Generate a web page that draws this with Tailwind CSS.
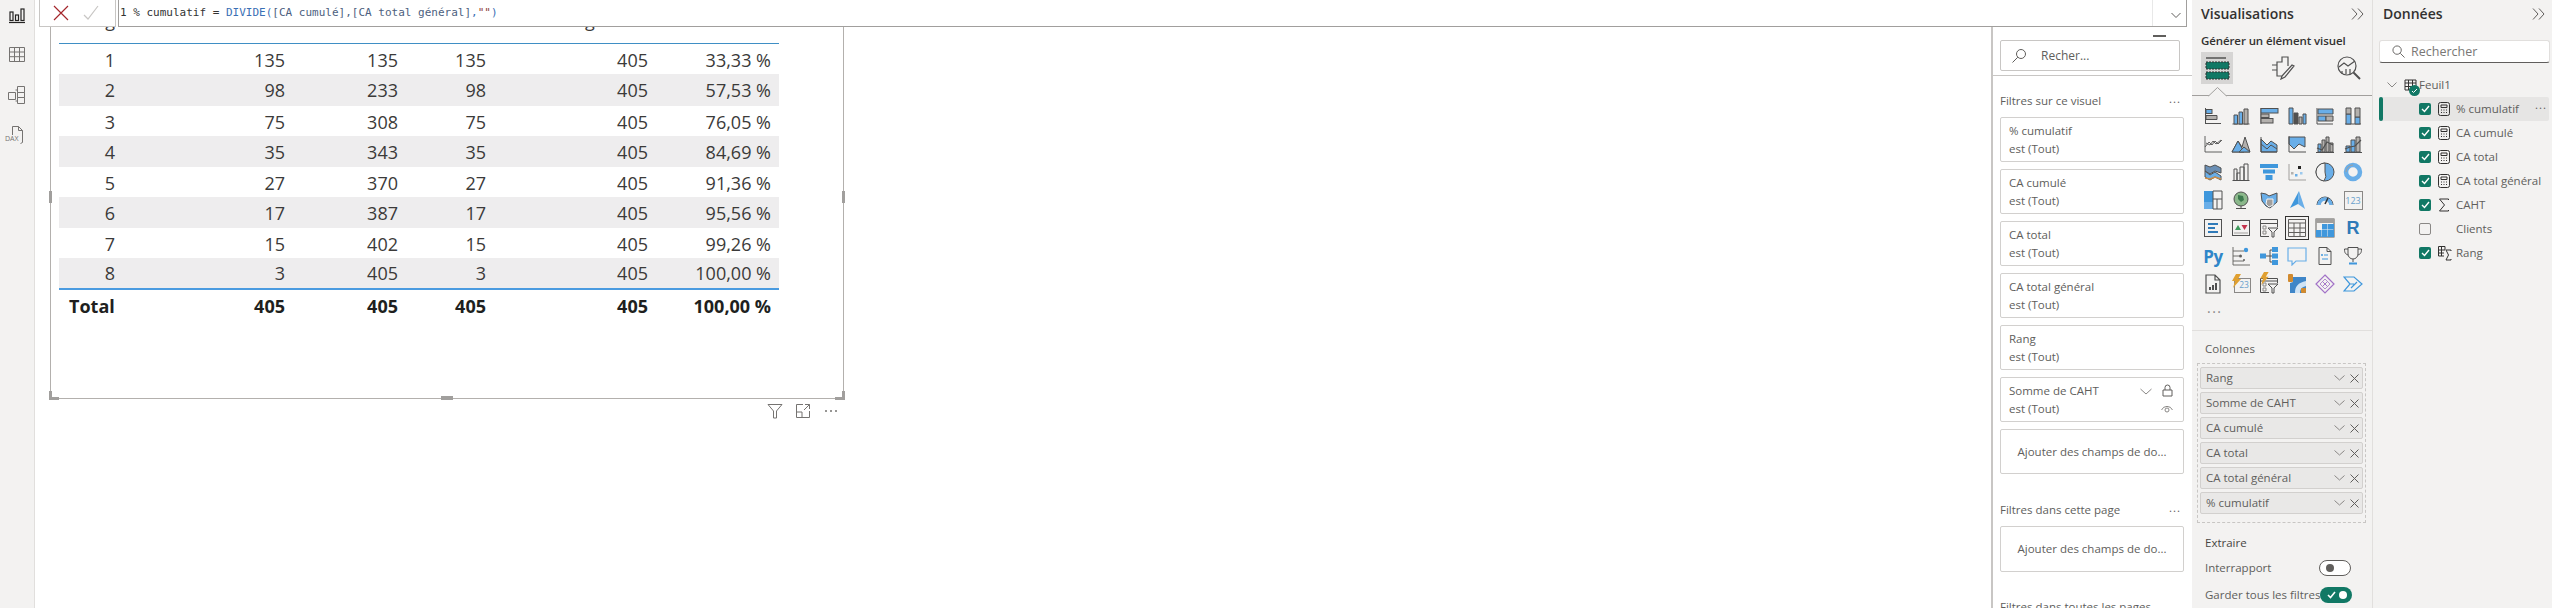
<!DOCTYPE html>
<html lang="fr">
<head>
<meta charset="UTF-8">
<title>Power BI</title>
<script src="https://cdn.jsdelivr.net/npm/@tailwindcss/browser@4"></script>
</head>
<body class="bg-white">
<div class="flex w-[2553px] h-[608px] overflow-hidden font-['Open_Sans',sans-serif] text-[#605e5c]">

  <!-- left rail -->
  <div class="w-[35px] h-full shrink-0 bg-[#f3f2f1] border-r border-[#e1dfdd] flex flex-col items-center pt-[5px]">
    <svg class="w-5 h-5" viewBox="0 0 20 20" fill="none" stroke="#252423" stroke-width="1.2"><path d="M2 17.5h16"/><rect x="3" y="7" width="3" height="8.5"/><rect x="8.5" y="10" width="3" height="5.5"/><rect x="14" y="4" width="3" height="11.5"/></svg>
    <svg class="w-5 h-5 mt-[19px]" viewBox="0 0 20 20" fill="none" stroke="#757371"><path d="M2.5 3.5h15v14h-15zM2.5 8h15M2.5 12.7h15M7.5 3.5v14M12.500 3.500v14"/></svg>
    <svg class="w-5 h-5 mt-[21px]" viewBox="0 0 20 20" fill="none" stroke="#757371"><path d="M1.500 7.500h7v7h-7zM10.500 1.500h7v6h-7zM10.500 7.500h7v5h-7zM10.500 12.500h7v6h-7zM8.500 5h2M8.500 16h2"/></svg>
    <div class="relative w-5 h-5 mt-[20px]">
      <svg class="w-5 h-5" viewBox="0 0 20 20" fill="none" stroke="#757371"><path d="M5.500 10V1.500h6l4 4v12l-2 1M11.500 1.500v4h4"/></svg>
      <span class="absolute left-[-2px] top-[10px] text-[7px] leading-[8px] text-[#757371] bg-[#f3f2f1]">DAX</span>
    </div>
  </div>

  <!-- formula bar + canvas + filters -->
  <div class="w-[2157px] h-full flex flex-col shrink-0">
    <div class="h-[27px] flex shrink-0 pl-[4px] pr-[5px] bg-white relative z-10">
      <div class="w-[77px] h-full border border-t-0 border-[#c8c6c4] flex items-center pl-[13px] gap-[14px]">
        <svg class="w-[16px] h-[16px]" viewBox="0 0 16 16" fill="none" stroke="#a4262c" stroke-width="1.200"><path d="M1 1l14 14M15 1L1 15"/></svg>
        <svg class="w-[16px] h-[16px]" viewBox="0 0 16 16" fill="none" stroke="#c8c6c4" stroke-width="1.200"><path d="M1 10l4 4L15 1"/></svg>
      </div>
      <div class="ml-[2px] flex-1 h-full border border-t-0 border-[#a19f9d] flex items-center pl-[1px] relative font-['DejaVu_Sans_Mono',monospace] text-[11px] text-[#333] whitespace-pre">
        <span>1 % cumulatif = <span class="text-[#3a6fb5]">DIVIDE(</span><span class="text-[#4d5f80]">[CA cumulé],[CA total général]</span><span class="text-[#3a6fb5]">,</span><span class="text-[#8c3b3b]">""</span><span class="text-[#3a6fb5]">)</span></span>
        <div class="absolute right-0 top-0 w-[34px] h-full border-l border-[#e8e8e8]">
          <div class="h-[2px] w-[13px] mt-[2px] bg-[#605e5c]"></div>
          <svg class="absolute right-[5px] top-[12px] w-[10px] h-[7px]" viewBox="0 0 10 7" fill="none" stroke="#605e5c"><path d="M.5 1l4.500 4.500L9.500 1"/></svg>
        </div>
      </div>
    </div>

    <div class="flex flex-1 min-h-0">
      <!-- report canvas -->
      <div class="relative w-[1956px] overflow-hidden bg-white">
        <div class="absolute left-[15px] top-[-47px] w-[794px] h-[419px] border border-[#b3b0ad] pl-[8px] pt-[27px] text-[18px] text-[#3b3a39]">
          <div class="w-[720px]">
            <div class="grid grid-cols-[64px_170px_113px_88px_162px_123px] h-[36px] border-b border-[#3f8fc5] leading-6 *:text-right *:pr-[8px] *:whitespace-nowrap">
              <div>Rang</div><div>Somme de CAHT</div><div>CA cumulé</div><div>CA total</div><div>CA total général</div><div>% cumulatif</div>
            </div>
            <div class="grid grid-cols-[64px_170px_113px_88px_162px_123px] items-center h-[30px] pt-[2px] *:text-right *:pr-[8px]"><div>1</div><div>135</div><div>135</div><div>135</div><div>405</div><div>33,33 %</div></div>
            <div class="grid grid-cols-[64px_170px_113px_88px_162px_123px] items-center h-[32px] pt-[1px] bg-[#eeedee] *:text-right *:pr-[8px]"><div>2</div><div>98</div><div>233</div><div>98</div><div>405</div><div>57,53 %</div></div>
            <div class="grid grid-cols-[64px_170px_113px_88px_162px_123px] items-center h-[30px] pt-[2px] *:text-right *:pr-[8px]"><div>3</div><div>75</div><div>308</div><div>75</div><div>405</div><div>76,05 %</div></div>
            <div class="grid grid-cols-[64px_170px_113px_88px_162px_123px] items-center h-[31px] pt-[1px] bg-[#eeedee] *:text-right *:pr-[8px]"><div>4</div><div>35</div><div>343</div><div>35</div><div>405</div><div>84,69 %</div></div>
            <div class="grid grid-cols-[64px_170px_113px_88px_162px_123px] items-center h-[30px] pt-[2px] *:text-right *:pr-[8px]"><div>5</div><div>27</div><div>370</div><div>27</div><div>405</div><div>91,36 %</div></div>
            <div class="grid grid-cols-[64px_170px_113px_88px_162px_123px] items-center h-[31px] pt-[1px] bg-[#eeedee] *:text-right *:pr-[8px]"><div>6</div><div>17</div><div>387</div><div>17</div><div>405</div><div>95,56 %</div></div>
            <div class="grid grid-cols-[64px_170px_113px_88px_162px_123px] items-center h-[30px] pt-[2px] *:text-right *:pr-[8px]"><div>7</div><div>15</div><div>402</div><div>15</div><div>405</div><div>99,26 %</div></div>
            <div class="grid grid-cols-[64px_170px_113px_88px_162px_123px] items-center h-[30px] pt-[1px] bg-[#eeedee] *:text-right *:pr-[8px]"><div>8</div><div>3</div><div>405</div><div>3</div><div>405</div><div>100,00 %</div></div>
            <div class="grid grid-cols-[64px_170px_113px_88px_162px_123px] items-center h-[35px] border-t-2 border-[#4a9be0] font-bold text-[#201f1e] *:text-right *:pr-[8px]"><div class="!text-left pl-[10px]">Total</div><div>405</div><div>405</div><div>405</div><div>405</div><div>100,00 %</div></div>
          </div>
          <!-- resize handles -->
          <div class="absolute left-[-2px] top-[210px] w-[3px] h-[12px] bg-[#a19f9d]"></div>
          <div class="absolute right-[-2px] top-[210px] w-[3px] h-[12px] bg-[#a19f9d]"></div>
          <div class="absolute left-[390px] bottom-[-2px] w-[12px] h-[4px] bg-[#a19f9d]"></div>
          <div class="absolute left-[-2px] bottom-[-2px] w-[10px] h-[9px] border-l-[3px] border-b-[3px] border-[#a19f9d]"></div>
          <div class="absolute right-[-2px] bottom-[-2px] w-[10px] h-[9px] border-r-[3px] border-b-[3px] border-[#a19f9d]"></div>
          <!-- visual header -->
          <div class="absolute top-full right-[4px] mt-[5px] flex gap-3 items-center">
            <svg class="w-4 h-4" viewBox="0 0 16 16" fill="none" stroke="#757371"><path d="M1 1.500h14L9.500 8v7h-3V8z"/></svg>
            <svg class="w-4 h-4" viewBox="0 0 16 16" fill="none" stroke="#757371"><path d="M8 1.500H1.500v13h13V8M1.500 9H7v5.500M10 1.500h4.500V6M14.500 1.500L9 7"/></svg>
            <svg class="w-4 h-4" viewBox="0 0 16 16" fill="#757371"><circle cx="3" cy="8" r="1"/><circle cx="8" cy="8" r="1"/><circle cx="13" cy="8" r="1"/></svg>
          </div>
        </div>
      </div>

      <!-- filter pane -->
      <div class="w-[201px] h-full border-l-2 border-[#c8c6c4] bg-white text-[11.5px] leading-[18px] overflow-hidden">
        <div class="ml-[7px] mt-[13px] w-[180px] h-[31px] border border-[#c8c6c4] rounded-[2px] flex items-center pl-[10px] gap-[14px] text-[12px]">
          <svg class="w-[16px] h-[16px]" viewBox="0 0 16 16" fill="none" stroke="#605e5c"><circle cx="10" cy="6" r="4.500"/><path d="M6.800 9.200L1.500 14.500"/></svg>
          <span>Recher...</span>
        </div>
        <div class="mt-[4px] border-b border-[#c8c6c4]"></div>
        <div class="ml-[7px] mt-[16px] w-[184px] flex justify-between pr-[3px]"><span>Filtres sur ce visuel</span><span class="tracking-[1px] leading-[14px]">...</span></div>
        <div class="ml-[7px] w-[184px] mt-[7px] flex flex-col gap-[7px]">
          <div class="h-[45px] border border-[#d2d0ce] rounded-[2px] px-[8px] pt-[4px]">% cumulatif<br>est (Tout)</div>
          <div class="h-[45px] border border-[#d2d0ce] rounded-[2px] px-[8px] pt-[4px]">CA cumulé<br>est (Tout)</div>
          <div class="h-[45px] border border-[#d2d0ce] rounded-[2px] px-[8px] pt-[4px]">CA total<br>est (Tout)</div>
          <div class="h-[45px] border border-[#d2d0ce] rounded-[2px] px-[8px] pt-[4px]">CA total général<br>est (Tout)</div>
          <div class="h-[45px] border border-[#d2d0ce] rounded-[2px] px-[8px] pt-[4px]">Rang<br>est (Tout)</div>
          <div class="relative h-[45px] border border-[#d2d0ce] rounded-[2px] px-[8px] pt-[4px]">Somme de CAHT<br>est (Tout)
            <svg class="absolute left-[139px] top-[10px] w-[12px] h-[7px]" viewBox="0 0 12 7" fill="none" stroke="#8a8886"><path d="M.5 1L6 6l5.500-5"/></svg>
            <svg class="absolute left-[161px] top-[6px] w-[11px] h-[13px]" viewBox="0 0 11 13" fill="none" stroke="#605e5c"><path d="M1 6h9v6H1zM3 6V3.500a2.500 2.500 0 015 0V6"/></svg>
            <svg class="absolute left-[160px] top-[26px] w-[12px] h-[9px]" viewBox="0 0 12 9" fill="none" stroke="#8a8886"><path d="M.5 6a6 6 0 0111 0"/><circle cx="6" cy="6" r="2"/></svg>
          </div>
          <div class="h-[45px] border border-[#d2d0ce] rounded-[2px] flex items-center justify-center">Ajouter des champs de do...</div>
        </div>
        <div class="ml-[7px] mt-[27px] w-[184px] flex justify-between pr-[3px]"><span>Filtres dans cette page</span><span class="tracking-[1px] leading-[14px]">...</span></div>
        <div class="ml-[7px] mt-[7px] w-[184px] h-[46px] border border-[#d2d0ce] rounded-[2px] flex items-center justify-center">Ajouter des champs de do...</div>
        <div class="ml-[7px] mt-[26px]">Filtres dans toutes les pages</div>
      </div>
    </div>
  </div>

  <!-- visualisations pane -->
  <div class="w-[181px] h-full shrink-0 bg-[#f3f2f1] border-r border-[#e1dfdd] text-[11.5px] leading-[18px]">
    <div class="h-[28px] flex items-center justify-between pl-[9px] pr-[8px]">
      <span class="text-[14px] font-semibold text-[#323130]">Visualisations</span>
      <svg class="w-[13px] h-[12px]" viewBox="0 0 13 12" fill="none" stroke="#605e5c"><path d="M1 .5L6 6l-5 5.500M7 .5L12 6l-5 5.500"/></svg>
    </div>
    <div class="mt-[4px] pl-[9px] h-[18px] font-semibold text-[#323130] text-[11.5px] tracking-[-0.1px]">Générer un élément visuel</div>
    <div class="mt-[2px] ml-[9px] flex items-center h-[32px]">
      <div class="w-[32px] h-[32px] bg-[#d6d5d4] flex items-center justify-center">
        <svg class="w-[26px] h-[26px]" viewBox="0 0 26 26"><path d="M2 3h20" stroke="#323130" stroke-width="1.200"/><rect x="2" y="7" width="23" height="7" fill="#117865" stroke="#323130" stroke-dasharray="2 1"/><rect x="2" y="17" width="23" height="7" fill="#117865" stroke="#323130" stroke-dasharray="2 1"/></svg>
      </div>
      <svg class="ml-[38px] w-[24px] h-[24px]" viewBox="0 0 24 24" fill="none" stroke="#505050" stroke-width="1.200"><path d="M1 9h5v11h5M6 9V6h5V1h6v9M1 14h5M11 20l10-11 2 1-9 11-4 2z"/></svg>
      <svg class="ml-[42px] w-[24px] h-[24px]" viewBox="0 0 24 24" fill="none" stroke="#505050" stroke-width="1.200"><circle cx="10" cy="10" r="9"/><path d="M16.500 16.500L23 23" stroke-width="2"/><path d="M2 11l5-4 4 3 7-5M5 15v3M9 13v5M13 13v5"/></svg>
    </div>
    <div class="relative h-[12px] border-b border-[#a19f9d]">
      <svg class="absolute left-[16px] top-[3px] w-[19px] h-[10px]" viewBox="0 0 19 10" fill="#f3f2f1" stroke="#a19f9d"><path d="M0 9.500L9.500 .5 19 9.500"/><path d="M0 10h19" stroke="#f3f2f1"/></svg>
    </div>

    <div class="ml-[7px] mt-[6px] grid grid-cols-[repeat(6,28px)] auto-rows-[28px] place-items-center">
      <!-- row 1 -->
      <svg class="w-5 h-5" viewBox="0 0 20 20" fill="none" stroke="#505050"><path d="M2.500 2v16M2.500 17.500H18"/><rect x="3" y="3.500" width="6" height="4" fill="#69aee8"/><path d="M3 9.500h11v4H3z" fill="#b3b0ad"/></svg>
      <svg class="w-5 h-5" viewBox="0 0 20 20" fill="none" stroke="#505050"><path d="M1.500 18h17"/><path d="M3 9h3.500v9H3zM8 6h3.500v12H8z" fill="#69aee8"/><path d="M13 3h4v15h-4z" fill="#b3b0ad"/></svg>
      <svg class="w-5 h-5" viewBox="0 0 20 20" fill="none" stroke="#505050"><path d="M2 2v16"/><rect x="2" y="2.500" width="17" height="4.500" fill="#69aee8"/><rect x="2" y="8" width="8" height="3.500" fill="#b3b0ad"/><rect x="2" y="12.500" width="12" height="4.500" fill="#b3b0ad"/></svg>
      <svg class="w-5 h-5" viewBox="0 0 20 20" fill="none" stroke="#505050"><path d="M2 2h4v16H2z" fill="#69aee8"/><path d="M7 7h4v11H7z" fill="#505050"/><path d="M12 11h3v7h-3z" fill="#b3b0ad"/><path d="M16 8h3v10h-3z" fill="#69aee8"/></svg>
      <svg class="w-5 h-5" viewBox="0 0 20 20" fill="none" stroke="#505050"><path d="M2 2v16M2 18h16"/><path d="M3 3h15v5H3z" fill="#69aee8"/><path d="M3 10h8v5H3z" fill="#69aee8"/><path d="M11 10h7v5h-7z" fill="#b3b0ad"/></svg>
      <svg class="w-5 h-5" viewBox="0 0 20 20" fill="none" stroke="#505050"><path d="M2 18h16"/><path d="M3 8h5v10H3zM12 11h5v7h-5z" fill="#69aee8"/><path d="M3 2h5v6H3zM12 2h5v9h-5z" fill="#b3b0ad"/></svg>
      <!-- row 2 -->
      <svg class="w-5 h-5" viewBox="0 0 20 20" fill="none" stroke="#505050"><path d="M2 2v16M2 18h17M2 13l4-5 3 3 3-4 3 3 4-4M3 9l4 2 3-4 3 3 5-4" stroke-width=".9"/></svg>
      <svg class="w-5 h-5" viewBox="0 0 20 20" stroke="#505050"><path d="M1 18l6-11 4 6 3-10 5 15z" fill="#b3b0ad"/><path d="M1 18l6-11 6 11z" fill="#69aee8"/><path d="M8 18l5-5 6 5z" fill="#69aee8"/></svg>
      <svg class="w-5 h-5" viewBox="0 0 20 20" stroke="#505050"><path d="M2 5l6 6 4-4 6 4v7H2z" fill="#69aee8"/><path d="M2 10l6 5 4-4 6 4" fill="none"/><path d="M2 3v15h16" fill="none"/></svg>
      <svg class="w-5 h-5" viewBox="0 0 20 20" stroke="#505050"><path d="M2 3h16v10l-6-3-5 5-5-5z" fill="#69aee8"/><path d="M2 2v16h17" fill="none"/></svg>
      <svg class="w-5 h-5" viewBox="0 0 20 20" fill="none" stroke="#505050"><path d="M1 18.500h18"/><path d="M3 10h3v8H3z" fill="#69aee8"/><path d="M7 6h3v12H7zM11 3h3v15h-3zM15 9h3v9h-3z"  fill="#b3b0ad"/><path d="M2 14l5 2 5-8 6 3" stroke-width="1.200"/></svg>
      <svg class="w-5 h-5" viewBox="0 0 20 20" fill="none" stroke="#505050"><path d="M1 18.500h18"/><path d="M3 12h4v6H3zM8 6h4v12H8z" fill="#69aee8"/><path d="M13 3h4v15h-4z" fill="#b3b0ad"/><path d="M2 15l5-2 5-1 6-6" stroke-width="1.200"/></svg>
      <!-- row 3 -->
      <svg class="w-5 h-5" viewBox="0 0 20 20" stroke="#505050"><path d="M2 3l5 2 5-2 6 3v5l-6-2-5 3-5-3z" fill="#6a8fb5"/><path d="M2 9l5 4 5-3 6 4v4l-6-3-5 3-5-3z" fill="#69aee8"/><path d="M2 16l5 1 5-2 6 2" stroke="#c98d4a" fill="none" stroke-width="1.500"/></svg>
      <svg class="w-5 h-5" viewBox="0 0 20 20" fill="none" stroke="#505050"><path d="M1.500 18.500h17M3 18V7h3v11M6 18v-7h3v7M9 11V5h4v13M13 18V2h4v16"/></svg>
      <svg class="w-5 h-5" viewBox="0 0 20 20" fill="#3f97dc"><path d="M1 2h18v4H1zM4 7.500h12v4H4zM6.500 13h7v5h-7z"/></svg>
      <svg class="w-5 h-5" viewBox="0 0 20 20" fill="none" stroke="#a19f9d"><path d="M2 2v16h17"/><rect x="4" y="10" width="2.500" height="2.500" fill="#b3b0ad" stroke="none"/><rect x="11" y="4" width="3" height="3" fill="#252423" stroke="none"/><rect x="8" y="12" width="2.500" height="2.500" fill="#69aee8" stroke="none"/><rect x="13" y="10" width="2.500" height="2.500" fill="#9cc9ee" stroke="none"/></svg>
      <svg class="w-5 h-5" viewBox="0 0 20 20" stroke="#505050"><circle cx="10" cy="10" r="9" fill="#69aee8"/><path d="M10 10V1a9 9 0 00-9 9 9 9 0 008 9 9 9 0 001-9z" fill="#f3f2f1"/></svg>
      <svg class="w-5 h-5" viewBox="0 0 20 20" fill="none"><circle cx="10" cy="10" r="7" stroke="#69aee8" stroke-width="4.500"/><path d="M3 10a7 7 0 017-7" stroke="#a19f9d" stroke-width="1"/></svg>
      <!-- row 4 -->
      <svg class="w-5 h-5" viewBox="0 0 20 20" stroke="#505050"><rect x="1" y="1" width="9" height="11" fill="#3f97dc" stroke="none"/><rect x="1" y="12" width="9" height="7" fill="#69aee8" stroke="none"/><path d="M10 1h9v18h-9zM10 9h9M14 9v10" fill="none"/></svg>
      <svg class="w-5 h-5" viewBox="0 0 20 20" fill="none" stroke="#505050"><circle cx="10" cy="9" r="7" fill="#8bb88b"/><path d="M7 5l5 1 1 4-3 2-3-3z" fill="#3c7a4e" stroke="none"/><path d="M5 18.500h10M10 16v2"/></svg>
      <svg class="w-5 h-5" viewBox="0 0 20 20" stroke="#505050"><path d="M2 3l5 1 3 2 8-3v9l-7 6-4-2-4-5z" fill="#69aee8"/><path d="M8 9l6 0v6l-4 2-3-3z" fill="#a19f9d" stroke="#f3f2f1"/></svg>
      <svg class="w-5 h-5" viewBox="0 0 20 20"><path d="M12 1L3 18l8-4z" fill="#3f97dc"/><path d="M12 1l6 18-7-5z" fill="#69aee8"/></svg>
      <svg class="w-5 h-5" viewBox="0 0 20 20" fill="none"><path d="M2 15a8 8 0 0116 0" stroke="#505050" stroke-width="1"/><path d="M4 15a6 6 0 0112 0" stroke="#69aee8" stroke-width="3.500"/><path d="M10 14l3-6" stroke="#323130" stroke-width="1.500"/></svg>
      <div class="w-[19px] h-[19px] border border-[#8a8886] flex items-center justify-center text-[9px] leading-none text-[#69a0cc]">123</div>
      <!-- row 5 -->
      <svg class="w-5 h-5" viewBox="0 0 20 20" fill="none" stroke="#505050"><rect x="1.500" y="1.500" width="17" height="17"/><path d="M5 6h10M5 10h7M5 14h10" stroke="#2f7ab8" stroke-width="1.800"/></svg>
      <svg class="w-5 h-5" viewBox="0 0 20 20" stroke="#505050"><rect x="1.500" y="2.500" width="17" height="15" fill="none"/><path d="M4 12l3-5 3 5z" fill="#3f9a5d" stroke="none"/><path d="M10.500 7h6l-3 5z" fill="#c4314b" stroke="none"/><path d="M3 15h14" stroke="#a19f9d"/></svg>
      <svg class="w-5 h-5" viewBox="0 0 20 20" fill="none" stroke="#505050"><path d="M10 18.500H1.500v-17h17V9M1.500 5.500h17"/><path d="M4 8h3v3H4zM4 13h3v3H4z" stroke="#8a8886"/><path d="M9 10h10l-4 4v5h-2v-5z" fill="#f3f2f1"/></svg>
      <div class="w-[24px] h-[24px] border border-[#323130] bg-[#f3f2f1] p-[1px]">
        <svg class="w-full h-full" viewBox="0 0 20 20" fill="none" stroke="#605e5c"><path d="M1.500 1.500h17v17h-17zM1.500 5h17M1.500 10h17M1.500 14.500h17M7 5v13.500M13 5v13.500"/></svg>
      </div>
      <svg class="w-5 h-5" viewBox="0 0 20 20"><rect x="1" y="1" width="18" height="18" fill="none" stroke="#605e5c"/><path d="M1 1h18v4H1z" fill="#a19f9d"/><path d="M7 6h5.500v5.500H7zM13 6h6v5.500h-6zM1 12h5.500v7H1zM7 12h5.500v7H7zM13 12h6v7h-6z" fill="#3f97dc"/></svg>
      <span class="font-['Liberation_Sans',sans-serif] font-bold text-[18px] leading-none text-[#2f7ab8]">R</span>
      <!-- row 6 -->
      <span class="font-bold text-[17px] leading-none text-[#2f86c9] tracking-[-0.5px]">Py</span>
      <svg class="w-5 h-5" viewBox="0 0 20 20" fill="none" stroke="#605e5c"><path d="M2 1v18h17M2 5h11M2 10h6M2 15h11" stroke-width=".9"/><circle cx="15" cy="4" r="2.200" fill="#3f97dc" stroke="none"/><circle cx="9.500" cy="10" r="1.500" fill="#605e5c" stroke="none"/><circle cx="13" cy="14" r="1" fill="#605e5c" stroke="none"/></svg>
      <svg class="w-5 h-5" viewBox="0 0 20 20"><path d="M7 10h4M11 4v12M11 4h2M11 10h2M11 16h2" stroke="#505050" fill="none"/><rect x="1" y="7.500" width="6" height="5" fill="#3f97dc"/><rect x="13" y="1" width="6" height="5" fill="#3f97dc"/><rect x="13" y="7.500" width="6" height="5" fill="#3f97dc"/><rect x="13" y="14" width="6" height="5" fill="#3f97dc"/></svg>
      <svg class="w-5 h-5" viewBox="0 0 20 20" fill="none" stroke="#69aee8" stroke-width="1.200"><path d="M1 2h18v13H9l-4 4v-4H1z"/></svg>
      <svg class="w-5 h-5" viewBox="0 0 20 20" fill="none" stroke="#505050"><path d="M4 1.500h8l4 4v13H4zM12 1.500v4h4"/><circle cx="7" cy="9" r="1" fill="#3f97dc" stroke="none"/><path d="M9 9h4M7 13h6" stroke="#3f97dc"/></svg>
      <svg class="w-5 h-5" viewBox="0 0 20 20" fill="none" stroke="#505050"><path d="M5 1.500h10V8a5 5 0 01-10 0zM5 3H1.500c0 4 1 5 3.500 6M15 3h3.500c0 4-1 5-3.500 6M10 13v3"/><path d="M6 16.500h8v2H6z" fill="#3f97dc" stroke="none"/></svg>
      <!-- row 7 -->
      <svg class="w-5 h-5" viewBox="0 0 20 20" fill="none" stroke="#505050" stroke-width="1.200"><path d="M3 1h9l5 5v13H3zM12 1v5h5"/><path d="M6 16v-3h2v3zM9 16v-5h2v5zM12 16v-7h2v7z" fill="#505050" stroke="none"/></svg>
      <div class="relative w-[20px] h-[20px]">
        <div class="absolute right-0 top-[4px] w-[17px] h-[15px] border border-[#8a8886] flex items-center justify-center pl-[3px] text-[8.5px] leading-none text-[#69a0cc]">23</div>
        <svg class="absolute left-0 top-0 w-[10px] h-[14px]" viewBox="0 0 10 14"><path d="M5 0h5L7 5h3L2 14l2-7H1z" fill="#e0a030"/></svg>
      </div>
      <div class="relative w-[20px] h-[20px]">
        <svg class="w-5 h-5" viewBox="0 0 20 20" fill="none" stroke="#505050"><path d="M10 18.500H1.500v-14h17V9M1.500 7h17"/><path d="M4 9h3v3H4zM4 14h3v3H4z" stroke="#8a8886"/><path d="M9 10h10l-4 4v5h-2v-5z" fill="#f3f2f1"/></svg>
        <svg class="absolute left-0 top-[-2px] w-[10px] h-[13px]" viewBox="0 0 10 14"><path d="M5 0h5L7 5h3L2 14l2-7H1z" fill="#e0a030"/></svg>
      </div>
      <svg class="w-5 h-5" viewBox="0 0 20 20"><path d="M6 3h13v16H3V9l3-1z" fill="#3f86c8"/><path d="M8 19c0-7 3-10 11-12v5c-4 1-6 3-6 7z" fill="#cfe3f5"/><rect x="1" y="0" width="5" height="8" rx="1" fill="#d18a2e"/><rect x="14" y="14" width="5" height="5" rx="1" fill="#d18a2e"/></svg>
      <svg class="w-5 h-5" viewBox="0 0 20 20" fill="none" stroke="#a272c7" stroke-width="1.200"><path d="M10 1l9 9-9 9-9-9z"/><path d="M10 5l2.500 2.500L10 10 7.500 7.500zM5 10l2.500-2.500L10 10l-2.500 2.500zM15 10l-2.500-2.500L10 10l2.500 2.500zM10 15l2.500-2.500L10 10l-2.500 2.500z" stroke-width=".8"/></svg>
      <svg class="w-5 h-5" viewBox="0 0 20 20" fill="none" stroke="#3f97dc" stroke-width="1.200"><path d="M1 3h10l8 7-8 7H1l6-7zM7 10h4M8 14l6-6"/></svg>
    </div>
    <div class="pl-[15px] h-[28px] leading-[20px] tracking-[1.500px] text-[14px] text-[#8a8886]">...</div>
    <div class="mt-[4px] border-b border-[#e1dfdd]"></div>

    <div class="mt-[9px] pl-[13px]">Colonnes</div>
    <div class="ml-[5px] mt-[5px] w-[169px] h-[160px] border border-dashed border-[#c8c6c4] pt-[3px] px-[2px] flex flex-col gap-[3px]">
      <div class="h-[22px] bg-[#e9e8e7] border border-[#d2d0ce] rounded-[2px] flex items-center pl-[5px] pr-[3px]"><span class="flex-1">Rang</span><svg class="w-[11px] h-[6px]" viewBox="0 0 11 6" fill="none" stroke="#8a8886"><path d="M.5.500L5.500 5l5-4.500"/></svg><svg class="ml-[5px] w-[9px] h-[9px]" viewBox="0 0 9 9" fill="none" stroke="#605e5c"><path d="M.5.500l8 8M8.500.500l-8 8"/></svg></div>
      <div class="h-[22px] bg-[#e9e8e7] border border-[#d2d0ce] rounded-[2px] flex items-center pl-[5px] pr-[3px]"><span class="flex-1">Somme de CAHT</span><svg class="w-[11px] h-[6px]" viewBox="0 0 11 6" fill="none" stroke="#8a8886"><path d="M.5.500L5.500 5l5-4.500"/></svg><svg class="ml-[5px] w-[9px] h-[9px]" viewBox="0 0 9 9" fill="none" stroke="#605e5c"><path d="M.5.500l8 8M8.500.500l-8 8"/></svg></div>
      <div class="h-[22px] bg-[#e9e8e7] border border-[#d2d0ce] rounded-[2px] flex items-center pl-[5px] pr-[3px]"><span class="flex-1">CA cumulé</span><svg class="w-[11px] h-[6px]" viewBox="0 0 11 6" fill="none" stroke="#8a8886"><path d="M.5.500L5.500 5l5-4.500"/></svg><svg class="ml-[5px] w-[9px] h-[9px]" viewBox="0 0 9 9" fill="none" stroke="#605e5c"><path d="M.5.500l8 8M8.500.500l-8 8"/></svg></div>
      <div class="h-[22px] bg-[#e9e8e7] border border-[#d2d0ce] rounded-[2px] flex items-center pl-[5px] pr-[3px]"><span class="flex-1">CA total</span><svg class="w-[11px] h-[6px]" viewBox="0 0 11 6" fill="none" stroke="#8a8886"><path d="M.5.500L5.500 5l5-4.500"/></svg><svg class="ml-[5px] w-[9px] h-[9px]" viewBox="0 0 9 9" fill="none" stroke="#605e5c"><path d="M.5.500l8 8M8.500.500l-8 8"/></svg></div>
      <div class="h-[22px] bg-[#e9e8e7] border border-[#d2d0ce] rounded-[2px] flex items-center pl-[5px] pr-[3px]"><span class="flex-1">CA total général</span><svg class="w-[11px] h-[6px]" viewBox="0 0 11 6" fill="none" stroke="#8a8886"><path d="M.5.500L5.500 5l5-4.500"/></svg><svg class="ml-[5px] w-[9px] h-[9px]" viewBox="0 0 9 9" fill="none" stroke="#605e5c"><path d="M.5.500l8 8M8.500.500l-8 8"/></svg></div>
      <div class="h-[22px] bg-[#e9e8e7] border border-[#d2d0ce] rounded-[2px] flex items-center pl-[5px] pr-[3px]"><span class="flex-1">% cumulatif</span><svg class="w-[11px] h-[6px]" viewBox="0 0 11 6" fill="none" stroke="#8a8886"><path d="M.5.500L5.500 5l5-4.500"/></svg><svg class="ml-[5px] w-[9px] h-[9px]" viewBox="0 0 9 9" fill="none" stroke="#605e5c"><path d="M.5.500l8 8M8.500.500l-8 8"/></svg></div>
    </div>
    <div class="mt-[11px] pl-[13px] text-[#484644]">Extraire</div>
    <div class="mt-[4px] h-[24px] pl-[13px] flex items-center justify-between pr-[21px]">
      <span>Interrapport</span>
      <div class="w-[32px] h-[16px] rounded-full border border-[#605e5c] bg-white flex items-center pl-[6px]"><div class="w-[8px] h-[8px] rounded-full bg-[#605e5c]"></div></div>
    </div>
    <div class="mt-[3px] h-[24px] pl-[13px] flex items-center justify-between pr-[21px] whitespace-nowrap">
      <span>Garder tous les filtres</span>
      <div class="w-[32px] h-[16px] rounded-full bg-[#117865] flex items-center justify-end pr-[5px] gap-[3px] shrink-0"><svg class="w-[9px] h-[8px]" viewBox="0 0 9 8" fill="none" stroke="#fff" stroke-width="1.600"><path d="M1 4l2.500 2.500L8 1"/></svg><div class="w-[8px] h-[8px] rounded-full bg-white"></div></div>
    </div>
  </div>

  <!-- data pane -->
  <div class="w-[179px] h-full shrink-0 bg-[#f3f2f1] text-[11.5px] leading-[18px]">
    <div class="h-[28px] flex items-center justify-between pl-[10px] pr-[7px]">
      <span class="text-[14px] font-semibold text-[#323130]">Données</span>
      <svg class="w-[13px] h-[12px]" viewBox="0 0 13 12" fill="none" stroke="#605e5c"><path d="M1 .5L6 6l-5 5.500M7 .5L12 6l-5 5.500"/></svg>
    </div>
    <div class="ml-[6px] mt-[12px] w-[171px] h-[23px] bg-white border border-[#e1dfdd] border-b-[#605e5c] rounded-[3px] flex items-center pl-[12px] gap-[6px] text-[12.500px] text-[#797775]">
      <svg class="w-[13px] h-[13px]" viewBox="0 0 14 14" fill="none" stroke="#605e5c"><circle cx="5.500" cy="5.500" r="4.500"/><path d="M9 9l4.500 4.500"/></svg>
      <span>Rechercher</span>
    </div>
    <div class="relative mt-[10px] ml-[6px] h-[24px] flex items-center">
      <svg class="ml-[8px] w-[10px] h-[6px]" viewBox="0 0 10 6" fill="none" stroke="#8a8886"><path d="M.5.500L5 5 9.500.5"/></svg>
      <svg class="ml-[7px] w-[13px] h-[12px]" viewBox="0 0 13 12" fill="none" stroke="#323130"><path d="M1 1h11v10H1zM1 4h11M1 7.500h11M4.500 1v10M8.500 1v10"/></svg>
      <div class="absolute left-[30px] top-[12px] w-[11px] h-[11px] rounded-full bg-[#117865] flex items-center justify-center"><svg class="w-[7px] h-[6px]" viewBox="0 0 7 6" fill="none" stroke="#fff"><path d="M1 3l1.500 1.500L6 1"/></svg></div>
      <span class="ml-[2px]">Feuil1</span>
    </div>

    <div class="relative ml-[6px] w-[170px] h-[24px] bg-[#e6e5e4] rounded-[2px] flex items-center">
      <div class="w-[4px] h-full bg-[#117865] rounded-[2px]"></div>
      <div class="ml-[36px] w-[12px] h-[12px] rounded-[2px] bg-[#117865] flex items-center justify-center"><svg class="w-[9px] h-[8px]" viewBox="0 0 9 8" fill="none" stroke="#fff" stroke-width="1.400"><path d="M1 4l2.500 2.500L8 1"/></svg></div>
      <svg class="ml-[5px] w-[16px] h-[16px]" viewBox="0 0 16 16" fill="none" stroke="#323130"><rect x="2.500" y="1.500" width="11" height="13" rx="2"/><path d="M5 4h6v2.500H5z"/><path d="M5 9h1M7.500 9h1M10 9h1M5 11.500h1M7.500 11.500h1M10 11.500h1"/></svg>
      <span class="ml-[4px]">% cumulatif</span>
      <span class="absolute right-[2px] top-[1px] leading-[14px] tracking-[1px]">...</span>
    </div>
    <div class="ml-[6px] h-[24px] flex items-center pl-[40px]">
      <div class="w-[12px] h-[12px] rounded-[2px] bg-[#117865] flex items-center justify-center"><svg class="w-[9px] h-[8px]" viewBox="0 0 9 8" fill="none" stroke="#fff" stroke-width="1.400"><path d="M1 4l2.500 2.500L8 1"/></svg></div>
      <svg class="ml-[5px] w-[16px] h-[16px]" viewBox="0 0 16 16" fill="none" stroke="#323130"><rect x="2.500" y="1.500" width="11" height="13" rx="2"/><path d="M5 4h6v2.500H5z"/><path d="M5 9h1M7.500 9h1M10 9h1M5 11.500h1M7.500 11.500h1M10 11.500h1"/></svg>
      <span class="ml-[4px]">CA cumulé</span>
    </div>
    <div class="ml-[6px] h-[24px] flex items-center pl-[40px]">
      <div class="w-[12px] h-[12px] rounded-[2px] bg-[#117865] flex items-center justify-center"><svg class="w-[9px] h-[8px]" viewBox="0 0 9 8" fill="none" stroke="#fff" stroke-width="1.400"><path d="M1 4l2.500 2.500L8 1"/></svg></div>
      <svg class="ml-[5px] w-[16px] h-[16px]" viewBox="0 0 16 16" fill="none" stroke="#323130"><rect x="2.500" y="1.500" width="11" height="13" rx="2"/><path d="M5 4h6v2.500H5z"/><path d="M5 9h1M7.500 9h1M10 9h1M5 11.500h1M7.500 11.500h1M10 11.500h1"/></svg>
      <span class="ml-[4px]">CA total</span>
    </div>
    <div class="ml-[6px] h-[24px] flex items-center pl-[40px]">
      <div class="w-[12px] h-[12px] rounded-[2px] bg-[#117865] flex items-center justify-center"><svg class="w-[9px] h-[8px]" viewBox="0 0 9 8" fill="none" stroke="#fff" stroke-width="1.400"><path d="M1 4l2.500 2.500L8 1"/></svg></div>
      <svg class="ml-[5px] w-[16px] h-[16px]" viewBox="0 0 16 16" fill="none" stroke="#323130"><rect x="2.500" y="1.500" width="11" height="13" rx="2"/><path d="M5 4h6v2.500H5z"/><path d="M5 9h1M7.500 9h1M10 9h1M5 11.500h1M7.500 11.500h1M10 11.500h1"/></svg>
      <span class="ml-[4px] whitespace-nowrap">CA total général</span>
    </div>
    <div class="ml-[6px] h-[24px] flex items-center pl-[40px]">
      <div class="w-[12px] h-[12px] rounded-[2px] bg-[#117865] flex items-center justify-center"><svg class="w-[9px] h-[8px]" viewBox="0 0 9 8" fill="none" stroke="#fff" stroke-width="1.400"><path d="M1 4l2.500 2.500L8 1"/></svg></div>
      <svg class="ml-[5px] w-[16px] h-[16px]" viewBox="0 0 16 16" fill="none" stroke="#323130"><path d="M12.500 3V2h-9l5 6-5 6h9v-1"/></svg>
      <span class="ml-[4px]">CAHT</span>
    </div>
    <div class="ml-[6px] h-[24px] flex items-center pl-[40px]">
      <div class="w-[12px] h-[12px] rounded-[2px] border border-[#8a8886]"></div>
      <span class="ml-[25px]">Clients</span>
    </div>
    <div class="ml-[6px] h-[24px] flex items-center pl-[40px]">
      <div class="w-[12px] h-[12px] rounded-[2px] bg-[#117865] flex items-center justify-center"><svg class="w-[9px] h-[8px]" viewBox="0 0 9 8" fill="none" stroke="#fff" stroke-width="1.400"><path d="M1 4l2.500 2.500L8 1"/></svg></div>
      <svg class="ml-[5px] w-[16px] h-[16px]" viewBox="0 0 16 16" fill="none" stroke="#323130"><path d="M8 11H2.500V1.500H9V5M2.500 5H9M2.500 8H8M5.500 1.500V11M15 6V5h-5l2.500 5L10 15h5v-1"/></svg>
      <span class="ml-[4px]">Rang</span>
    </div>
  </div>
</div>
</body>
</html>
